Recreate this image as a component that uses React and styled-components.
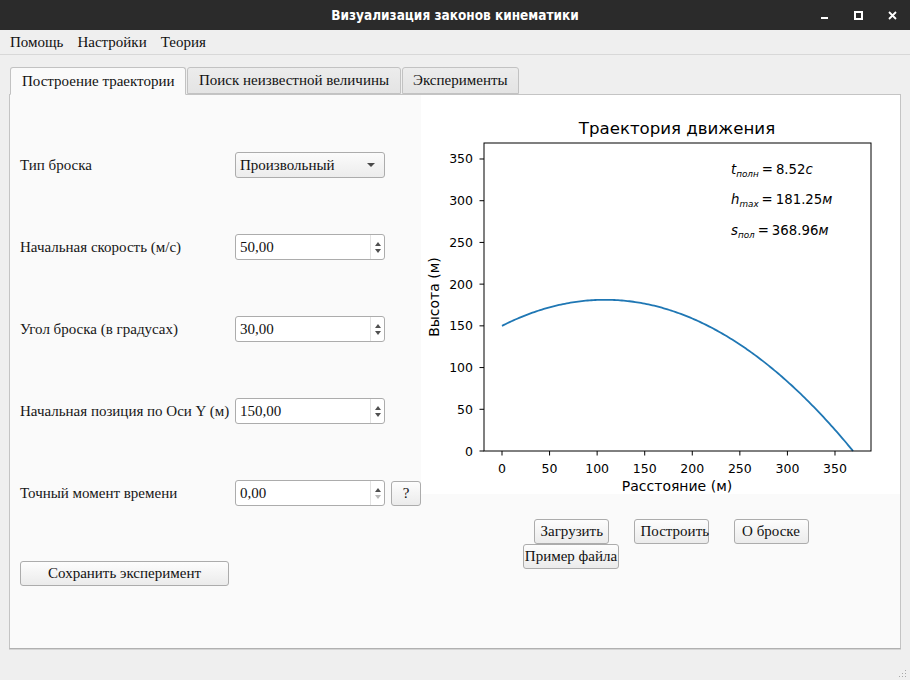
import React from 'react';
import styled, { createGlobalStyle } from 'styled-components';

const GlobalStyle = createGlobalStyle`
  html, body {
    margin: 0;
    padding: 0;
    background: #efefef;
  }
  * {
    box-sizing: border-box;
  }
`;

const SERIF = `"Liberation Serif", "Times New Roman", serif`;
const PLOT_FONT = `"DejaVu Sans", sans-serif`;

// plot geometry (pixels inside the figure)
const FIG_W = 479;
const FIG_H = 399;
const AX = { left: 63, right: 450, top: 48, bottom: 356 };
const px = (x) => 81 + x * 0.9514;
const py = (y) => AX.bottom - y * 0.8343;

const trajectory = () => {
  // g = 10, v0 = 50, angle 30°, y0 = 150
  const pts = [];
  for (let x = 0; x <= 368.96; x += 2) {
    pts.push([x, 150 + x * Math.tan(Math.PI / 6) - (x * x) / 375]);
  }
  pts.push([368.96, 0]);
  return pts.map(([x, y], i) => `${i ? 'L' : 'M'}${px(x).toFixed(2)},${py(y).toFixed(2)}`).join(' ');
};

const fields = [
  { label: 'Начальная скорость (м/с)', value: '50,00' },
  { label: 'Угол броска (в градусах)', value: '30,00' },
  { label: 'Начальная позиция по Оси Y (м)', value: '150,00' },
  { label: 'Точный момент времени', value: '0,00', atMin: true, help: true },
];

const notes = [
  { sym: 't', sub: 'полн', value: '8.52', unit: 'c', y: 79 },
  { sym: 'h', sub: 'max', value: '181.25', unit: 'м', y: 109 },
  { sym: 's', sub: 'пол', value: '368.96', unit: 'м', y: 140 },
];

const TitleBar = styled.div`
  height: 30px;
  background: #2b2b2b;
  display: flex;
  align-items: center;
  justify-content: center;
  position: relative;
  color: #ffffff;
  font-family: "DejaVu Sans", "Liberation Sans", sans-serif;
  font-stretch: condensed;
  font-weight: bold;
  font-size: 13.5px;
`;

const WindowButtons = styled.div`
  position: absolute;
  right: 13px;
  top: 0;
  height: 30px;
  display: flex;
  align-items: center;
  gap: 25px;
`;

const WinIcon = styled.svg`
  width: 9px;
  height: 9px;
  display: block;
`;

const MenuBar = styled.div`
  height: 25px;
  background: #efefef;
  border-bottom: 1px solid #d8d8d8;
  display: flex;
  align-items: center;
  padding-left: 10px;
  gap: 14px;
  font-family: ${SERIF};
  font-size: 15px;
  color: #111;
`;

const MenuItem = styled.span``;

const Main = styled.div`
  padding: 11px 9px 0 9px;
`;

const TabBar = styled.div`
  display: flex;
  align-items: flex-end;
  padding-left: 1px;
  height: 28px;
  position: relative;
  z-index: 1;
`;

const Tab = styled.div`
  height: ${(p) => (p.$active ? 28 : 27)}px;
  margin-right: 1px;
  padding: 0 ${(p) => (p.$active ? 11 : 10.5)}px;
  display: flex;
  align-items: center;
  font-family: ${SERIF};
  font-size: 15px;
  color: #111;
  background: ${(p) => (p.$active ? '#fafafa' : 'linear-gradient(#ececec, #e4e4e4)')};
  border: 1px solid #c2c2c2;
  border-bottom-color: ${(p) => (p.$active ? '#fafafa' : '#c2c2c2')};
  border-radius: 3px 3px 0 0;
  margin-bottom: ${(p) => (p.$active ? -1 : 0)}px;
`;

const Pane = styled.div`
  height: 555px;
  background: #fafafa;
  border: 1px solid #c4c4c4;
  border-bottom-color: #b0b0b0;
  box-shadow: 0 1px 0 #d4d4d4;
  display: flex;
`;

const FormColumn = styled.div`
  width: 411px;
  padding: 29px 0 0 10px;
  display: flex;
  flex-direction: column;
`;

const FormRow = styled.div`
  height: 82px;
  display: flex;
  align-items: center;
`;

const Label = styled.span`
  width: 215px;
  font-family: ${SERIF};
  font-size: 15px;
  color: #161616;
`;

const Combo = styled.div`
  width: 150px;
  height: 26px;
  border: 1px solid #acacac;
  border-radius: 3px;
  background: linear-gradient(#fbfbfb, #ececec);
  display: flex;
  align-items: center;
  justify-content: space-between;
  padding: 0 9px 0 4px;
  font-family: ${SERIF};
  font-size: 15px;
  color: #111;
`;

const ComboArrow = styled.span`
  width: 0;
  height: 0;
  border-left: 4px solid transparent;
  border-right: 4px solid transparent;
  border-top: 4px solid #4a4a4a;
`;

const SpinBox = styled.div`
  width: 150px;
  height: 26px;
  border: 1px solid #acacac;
  border-radius: 3px;
  background: #ffffff;
  display: flex;
  align-items: stretch;
`;

const SpinText = styled.span`
  flex: 1;
  display: flex;
  align-items: center;
  padding-left: 4px;
  font-family: ${SERIF};
  font-size: 15px;
  color: #111;
`;

const SpinArrows = styled.div`
  width: 14px;
  border-left: 1px solid #e2e2e2;
  display: flex;
  flex-direction: column;
  align-items: center;
  justify-content: center;
  gap: 3px;
`;

const Arrow = styled.span`
  width: 0;
  height: 0;
  border-left: 3.5px solid transparent;
  border-right: 3.5px solid transparent;
  ${(p) => (p.$up ? 'border-bottom' : 'border-top')}: 4px solid ${(p) => (p.$disabled ? '#b8b8b8' : '#505050')};
`;

const Button = styled.button`
  height: 25px;
  padding: 0 ${(p) => p.$pad ?? 6}px;
  width: ${(p) => (p.$width ? `${p.$width}px` : 'auto')};
  border: 1px solid #acacac;
  border-radius: 3px;
  background: linear-gradient(#fdfdfd, #ebebeb);
  font-family: ${SERIF};
  font-size: 15px;
  color: #111;
  white-space: nowrap;
`;

const HelpButton = styled(Button)`
  margin-left: 6px;
  width: 30px;
  padding: 0;
`;

const SaveRow = styled.div`
  margin-top: 27px;
`;

const PlotColumn = styled.div`
  width: 479px;
  display: flex;
  flex-direction: column;
`;

const Figure = styled.svg`
  display: block;
  background: #ffffff;
`;

const ButtonGrid = styled.div`
  margin: 25px 0 0 100px;
  display: grid;
  grid-template-columns: repeat(3, 100px);
  justify-items: center;
`;

const Grip = styled.svg`
  position: absolute;
  right: 3px;
  bottom: 1px;
  width: 10px;
  height: 10px;
`;

const Window = styled.div`
  position: relative;
  width: 910px;
  height: 680px;
  overflow: hidden;
  background: #efefef;
`;

const tickText = {
  fontFamily: PLOT_FONT,
  fontSize: 12.5,
  fill: '#000',
};

const axisLabel = { ...tickText, fontSize: 14 };

const Plot = () => (
  <Figure width={FIG_W} height={FIG_H} viewBox={`0 0 ${FIG_W} ${FIG_H}`}>
    <text x={256} y={39} textAnchor="middle" style={{ ...tickText, fontSize: 16.6 }}>
      Траектория движения
    </text>
    <path d={trajectory()} fill="none" stroke="#1f77b4" strokeWidth={1.8} />
    <rect
      x={AX.left}
      y={AX.top}
      width={AX.right - AX.left}
      height={AX.bottom - AX.top}
      fill="none"
      stroke="#000"
      strokeWidth={1}
    />
    {[0, 50, 100, 150, 200, 250, 300, 350].map((v) => (
      <g key={`x${v}`}>
        <line x1={px(v)} x2={px(v)} y1={AX.bottom} y2={AX.bottom + 4.5} stroke="#000" />
        <text x={px(v)} y={378} textAnchor="middle" style={tickText}>
          {v}
        </text>
      </g>
    ))}
    {[0, 50, 100, 150, 200, 250, 300, 350].map((v) => (
      <g key={`y${v}`}>
        <line x1={AX.left - 4.5} x2={AX.left} y1={py(v)} y2={py(v)} stroke="#000" />
        <text x={52} y={py(v) + 4.5} textAnchor="end" style={tickText}>
          {v}
        </text>
      </g>
    ))}
    <text x={256} y={396} textAnchor="middle" style={axisLabel}>
      Расстояние (м)
    </text>
    <text transform="translate(18 202) rotate(-90)" textAnchor="middle" style={axisLabel}>
      Высота (м)
    </text>
    <g style={{ ...tickText, fontSize: 13.3 }}>
      {notes.map((n) => (
        <text key={n.sym} x={310} y={n.y}>
          <tspan fontStyle="italic">{n.sym}</tspan>
          <tspan fontStyle="italic" fontSize={8.8} dy={3}>{n.sub}</tspan>
          <tspan dx={3} dy={-3}>=</tspan>
          <tspan dx={3}>{n.value}</tspan>
          <tspan fontStyle="italic">{n.unit}</tspan>
        </text>
      ))}
    </g>
  </Figure>
);

export default function App() {
  return (
    <Window>
      <GlobalStyle />
      <TitleBar>
        Визуализация законов кинематики
        <WindowButtons>
          <WinIcon viewBox="0 0 9 9">
            <rect x="1" y="6" width="7" height="2" fill="#fff" />
          </WinIcon>
          <WinIcon viewBox="0 0 9 9">
            <rect x="1" y="1" width="7" height="7" fill="none" stroke="#fff" strokeWidth="2" />
          </WinIcon>
          <WinIcon viewBox="0 0 9 9">
            <path d="M1 1 L8 8 M8 1 L1 8" stroke="#fff" strokeWidth="1.8" />
          </WinIcon>
        </WindowButtons>
      </TitleBar>
      <MenuBar>
        <MenuItem>Помощь</MenuItem>
        <MenuItem>Настройки</MenuItem>
        <MenuItem>Теория</MenuItem>
      </MenuBar>
      <Main>
        <TabBar>
          <Tab $active>Построение траектории</Tab>
          <Tab>Поиск неизвестной величины</Tab>
          <Tab>Эксперименты</Tab>
        </TabBar>
        <Pane>
          <FormColumn>
            <FormRow>
              <Label>Тип броска</Label>
              <Combo>
                Произвольный
                <ComboArrow />
              </Combo>
            </FormRow>
            {fields.map((f) => (
              <FormRow key={f.label}>
                <Label>{f.label}</Label>
                <SpinBox>
                  <SpinText>{f.value}</SpinText>
                  <SpinArrows>
                    <Arrow $up />
                    <Arrow $disabled={f.atMin} />
                  </SpinArrows>
                </SpinBox>
                {f.help && <HelpButton>?</HelpButton>}
              </FormRow>
            ))}
            <SaveRow>
              <Button $width={209}>Сохранить эксперимент</Button>
            </SaveRow>
          </FormColumn>
          <PlotColumn>
            <Plot />
            <ButtonGrid>
              <Button $width={75}>Загрузить</Button>
              <Button $width={75}>Построить</Button>
              <Button $width={75}>О броске</Button>
              <Button $pad={1}>Пример файла</Button>
            </ButtonGrid>
          </PlotColumn>
        </Pane>
      </Main>
      <Grip viewBox="0 0 10 10">
        {[[8, 1], [5, 4], [8, 4], [2, 7], [5, 7], [8, 7]].map(([x, y]) => (
          <rect key={`${x}-${y}`} x={x} y={y} width="1" height="1" fill="#a8a8a8" />
        ))}
      </Grip>
    </Window>
  );
}
